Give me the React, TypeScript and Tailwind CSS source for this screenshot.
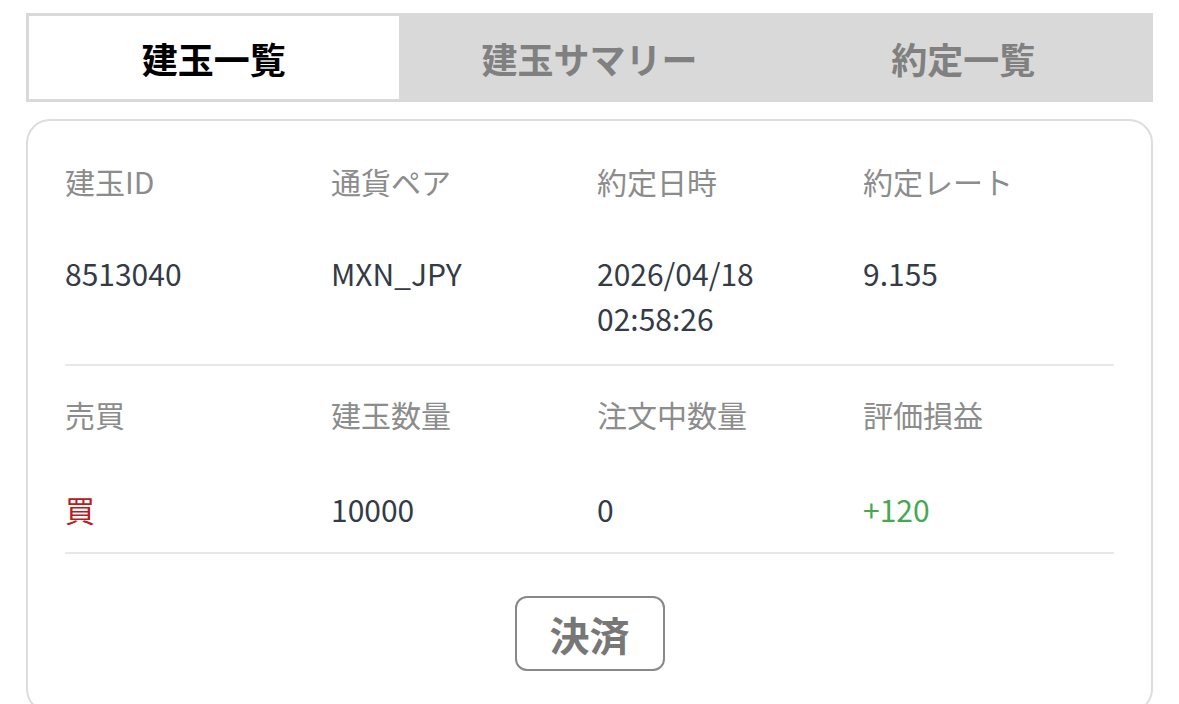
import React from 'react';

const font = { fontFamily: '"Noto Sans CJK JP", "Noto Sans", sans-serif' };

type Cell = { label: string; value: React.ReactNode; tone?: 'buy' | 'plus' };

const rows: Cell[][] = [
  [
    { label: '建玉ID', value: '8513040' },
    { label: '通貨ペア', value: 'MXN_JPY' },
    {
      label: '約定日時',
      value: (
        <>
          2026/04/18
          <br />
          02:58:26
        </>
      ),
    },
    { label: '約定レート', value: '9.155' },
  ],
  [
    { label: '売買', value: '買', tone: 'buy' },
    { label: '建玉数量', value: '10000' },
    { label: '注文中数量', value: '0' },
    { label: '評価損益', value: '+120', tone: 'plus' },
  ],
];

function Tabs() {
  const tabs = ['建玉一覧', '建玉サマリー', '約定一覧'];
  return (
    <div className="grid grid-cols-3 border-[3px] border-[#d9d9d9] bg-[#d9d9d9]">
      {tabs.map((t, i) => (
        <div
          key={t}
          className={
            i === 0
              ? 'mr-[4px] flex h-[83px] items-center justify-center bg-white text-[36px] font-bold text-black'
              : 'flex h-[83px] items-center justify-center text-[36px] font-bold text-[#808080]'
          }
        >
          {t}
        </div>
      ))}
    </div>
  );
}

function Row({ cells, first }: { cells: Cell[]; first?: boolean }) {
  return (
    <div
      className={
        first
          ? 'grid grid-cols-[266px_266px_266px_1fr] border-b-2 border-[#e8e8e8] pt-[38px] pb-[23px]'
          : 'grid grid-cols-[266px_266px_266px_1fr] border-b-2 border-[#e8e8e8] pt-[26px] pb-[20px]'
      }
    >
      {cells.map((c) => (
        <div key={c.label} className="text-[30px] leading-[45px]">
          <div className="text-[#8c8c8c]">{c.label}</div>
          <div
            className={
              (first ? 'mt-[47px] ' : 'mt-[50px] ') +
              (c.tone === 'buy'
                ? 'text-[#b3201c]'
                : c.tone === 'plus'
                  ? 'text-[#45a852]'
                  : 'text-[#333b47]')
            }
          >
            {c.value}
          </div>
        </div>
      ))}
    </div>
  );
}

export default function App() {
  return (
    <div className="h-[704px] overflow-hidden bg-white px-[26px] pt-[13px]" style={font}>
      <Tabs />
      <div className="mt-[17px] rounded-[24px] border-2 border-[#dddddd] px-[37px] pb-[40px]">
        {rows.map((r, i) => (
          <Row key={i} cells={r} first={i === 0} />
        ))}
        <div className="flex justify-center pt-[42px]">
          <button className="h-[75px] w-[150px] rounded-[12px] border-2 border-[#888888] text-[40px] font-bold text-[#777777]">
            決済
          </button>
        </div>
      </div>
    </div>
  );
}
